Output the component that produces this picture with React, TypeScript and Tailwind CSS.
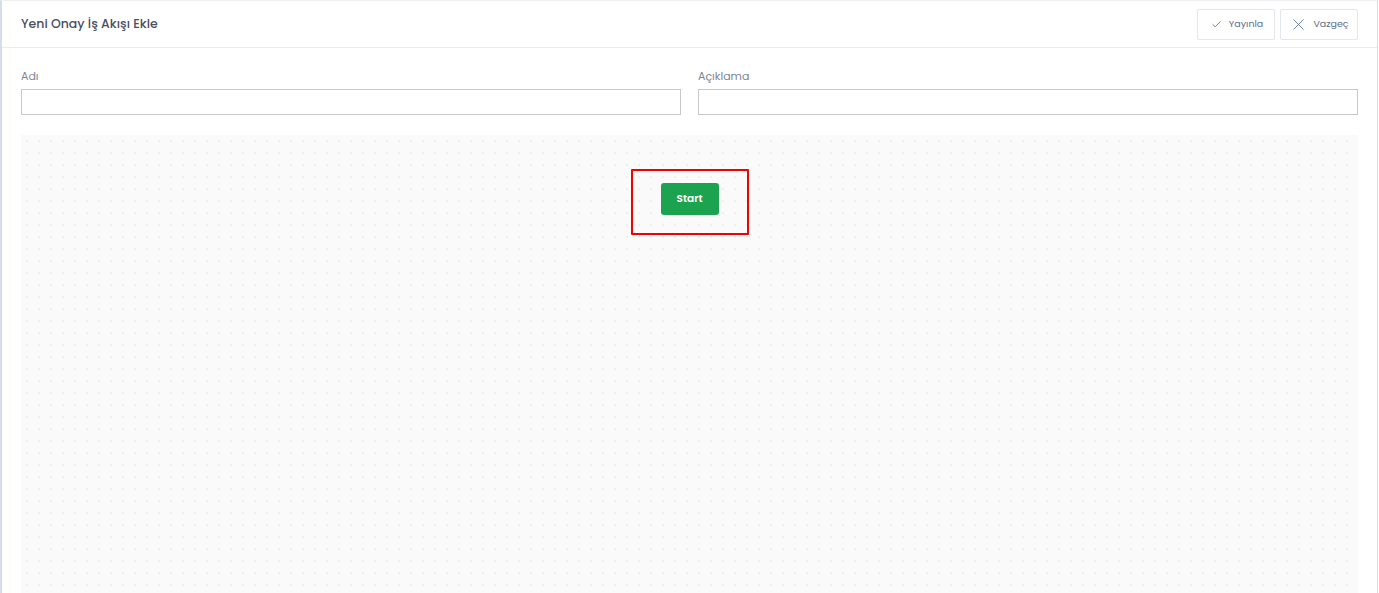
import { Check, X } from 'lucide-react'

const font = { fontFamily: 'Poppins, Inter, "Noto Sans", sans-serif' }

function Field({ label }: { label: string }) {
  return (
    <div className="flex flex-col">
      <label className="text-[11px] leading-none text-[#7e8299] pt-[2px] mb-[7px]">{label}</label>
      <input className="h-[26px] w-full border border-[#c8c8c8] bg-white outline-none px-2 text-xs" />
    </div>
  )
}

export default function App() {
  return (
    <div className="w-[1379px] h-[593px] bg-white overflow-hidden" style={font}>
      <div className="w-[1378px] h-[593px] border-l-2 border-r border-[#d6dce8] border-t border-t-[#eef0f4] flex flex-col">
        <div className="h-[47px] shrink-0 flex items-center justify-between pl-[19px] pr-[19px] border-b border-[#e9ebf0]">
          <h1 className="text-[12.5px] font-medium text-[#4a4f63]">Yeni Onay İş Akışı Ekle</h1>
          <div className="flex gap-[5px]">
            <button className="h-[31px] w-[78px] border border-[#e4e6ef] rounded-[2px] flex items-center justify-center gap-[7px] text-[9.5px] text-[#5e6f8c] pl-[2px]">
              <Check size={11} strokeWidth={1.8} className="text-[#4a6aa5]" />
              Yayınla
            </button>
            <button className="h-[31px] w-[78px] border border-[#e4e6ef] rounded-[2px] flex items-center justify-center gap-[5px] text-[9.5px] text-[#5e6f8c]">
              <X size={19} strokeWidth={1} className="text-[#4a6aa5]" />
              Vazgeç
            </button>
          </div>
        </div>

        <div className="flex-1 flex flex-col px-[19px] pt-[21px]">
          <div className="grid grid-cols-2 gap-[17px]">
            <Field label="Adı" />
            <Field label="Açıklama" />
          </div>

          <div className="mt-[20px] flex-1 bg-[#fafafa] bg-[radial-gradient(circle_at_center,#efefef_0,#efefef_1px,transparent_1.6px)] bg-size-[12px_12px] flex justify-center pt-[34px]">
            <div className="border-2 border-[#f40000] w-[118px] h-[66px] flex items-start justify-center pt-[12px] rounded-[1px]">
              <button className="w-[58px] h-[32px] rounded-[3px] bg-[#1ca34f] text-white text-[10.5px] font-semibold">
                Start
              </button>
            </div>
          </div>
        </div>
      </div>
    </div>
  )
}
